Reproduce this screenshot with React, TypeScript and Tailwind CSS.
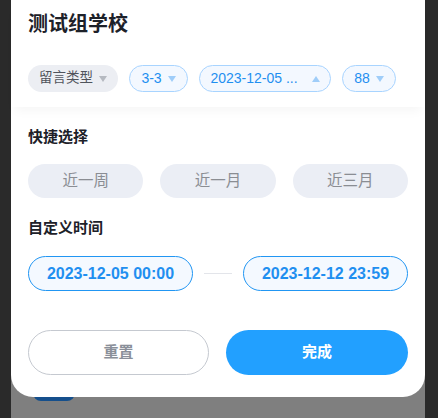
import React from "react";

const font = { fontFamily: '"Liberation Sans", "Noto Sans CJK SC", sans-serif' };

function Caret({ up = false, color }: { up?: boolean; color: string }) {
  return (
    <svg width="8" height="6" viewBox="0 0 8 6" className="ml-[6px]">
      {up ? (
        <path d="M4 0 L8 6 L0 6 Z" fill={color} />
      ) : (
        <path d="M0 0 L8 0 L4 6 Z" fill={color} />
      )}
    </svg>
  );
}

export default function App() {
  return (
    <div
      className="w-[438px] h-[418px] bg-[#2a2a2a] flex overflow-hidden"
      style={font}
    >
      <div className="ml-[11px] w-[414px] h-full bg-[#7f7f7f] relative">
        <div className="absolute left-[22px] top-[385px] w-[42px] h-[16px] rounded-full bg-[#154f8c]" />
        <div className="relative bg-white h-[397px] rounded-b-[22px] flex flex-col">
          <div className="px-[17px] pt-[11px] pb-[15px] shadow-[0_8px_10px_-4px_rgba(0,0,0,0.04)]">
            <div className="text-[20px] font-bold text-[#1d2129] leading-[26px]">测试组学校</div>
            <div className="flex items-center mt-[28px] gap-[11px]">
              <div className="h-[27px] w-[90px] rounded-full bg-[#eceef3] flex items-center justify-center text-[13.5px] text-[#50545c]">
                留言类型
                <Caret color="#b5b9c0" />
              </div>
              <div className="h-[27px] w-[59px] rounded-full bg-[#f3f8ff] border border-[#a8d4ff] flex items-center justify-center text-[14px] text-[#1f8ff0]">
                3-3
                <Caret color="#9fcdf9" />
              </div>
              <div className="h-[27px] w-[132px] rounded-full bg-[#f3f8ff] border border-[#a8d4ff] flex items-center justify-center text-[14px] text-[#1f8ff0]">
                2023-12-05 ...
                <span className="ml-[8px] flex">
                  <Caret up color="#9fcdf9" />
                </span>
              </div>
              <div className="h-[27px] w-[54px] rounded-full bg-[#f3f8ff] border border-[#a8d4ff] flex items-center justify-center text-[14px] text-[#1f8ff0]">
                88
                <Caret color="#9fcdf9" />
              </div>
            </div>
          </div>
          <div className="px-[17px] pt-[20px]">
            <div className="text-[15px] font-semibold text-[#1d2129] leading-[20px]">快捷选择</div>
            <div className="grid grid-cols-3 gap-[17px] mt-[17px]">
              {["近一周", "近一月", "近三月"].map((t) => (
                <div
                  key={t}
                  className="h-[34px] rounded-full bg-[#ebeef5] flex items-center justify-center text-[15.5px] text-[#8a8d93]"
                >
                  {t}
                </div>
              ))}
            </div>
            <div className="text-[15px] font-semibold text-[#1d2129] leading-[20px] mt-[20px]">自定义时间</div>
            <div className="flex items-center mt-[18px]">
              <div className="w-[165px] h-[35px] rounded-full border border-[#2196f3] bg-[#f4f9ff] flex items-center justify-center text-[16px] font-bold text-[#1f8ff0]">
                2023-12-05 00:00
              </div>
              <div className="flex-1 flex justify-center">
                <div className="w-[28px] h-px bg-[#e3e5ea]" />
              </div>
              <div className="w-[165px] h-[35px] rounded-full border border-[#2196f3] bg-[#f4f9ff] flex items-center justify-center text-[16px] font-bold text-[#1f8ff0]">
                2023-12-12 23:59
              </div>
            </div>
            <div className="flex gap-[17px] mt-[39px]">
              <div className="w-[181px] h-[45px] rounded-full border border-[#c5c9d0] bg-white flex items-center justify-center text-[15px] font-bold text-[#8a8f99]">
                重置
              </div>
              <div className="flex-1 h-[45px] rounded-full bg-[#22a0ff] flex items-center justify-center text-[15px] font-bold text-white">
                完成
              </div>
            </div>
          </div>
        </div>
      </div>
    </div>
  );
}
